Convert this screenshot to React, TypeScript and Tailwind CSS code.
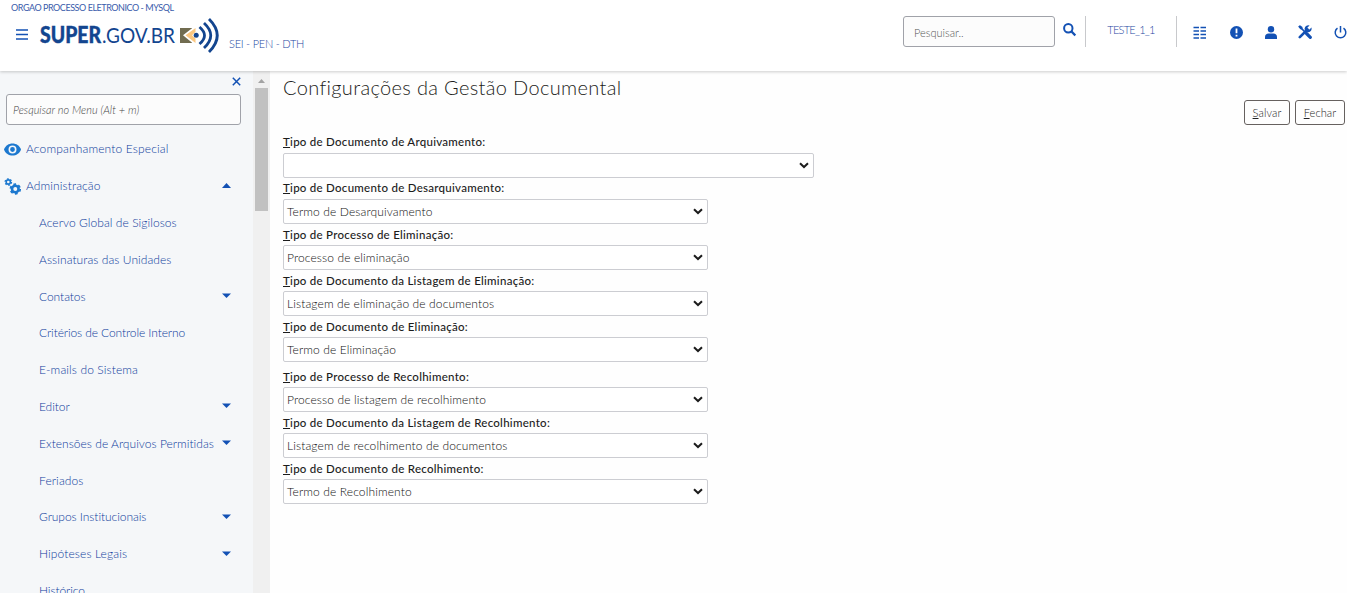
import React from "react";

const menu: { label: string; arrow?: boolean; spacing?: string }[] = [
  { label: "Acervo Global de Sigilosos", spacing: "tracking-[0.060px]" },
  { label: "Assinaturas das Unidades", spacing: "tracking-[0.060px]" },
  { label: "Contatos", arrow: true, spacing: "tracking-[-0.050px]" },
  { label: "Critérios de Controle Interno", spacing: "tracking-[-0.100px]" },
  { label: "E-mails do Sistema" },
  { label: "Editor", arrow: true, spacing: "tracking-[-0.050px]" },
  { label: "Extensões de Arquivos Permitidas", arrow: true, spacing: "tracking-[0.030px]" },
  { label: "Feriados" },
  { label: "Grupos Institucionais", arrow: true, spacing: "tracking-[-0.060px]" },
  { label: "Hipóteses Legais", arrow: true },
  { label: "Histórico", spacing: "tracking-[-0.100px]" },
];

const fields = [
  { label: "ipo de Documento de Arquivamento:", value: "", box: "w-[531px]", lead: "leading-[20px]" },
  { label: "ipo de Documento de Desarquivamento:", value: "Termo de Desarquivamento", box: "w-[425px]", lead: "leading-[20px]" },
  { label: "ipo de Processo de Eliminação:", value: "Processo de eliminação", box: "w-[425px]", lead: "leading-[22px]" },
  { label: "ipo de Documento da Listagem de Eliminação:", value: "Listagem de eliminação de documentos", box: "w-[425px]", lead: "leading-[22px]" },
  { label: "ipo de Documento de Eliminação:", value: "Termo de Eliminação", box: "w-[425px] mb-1", lead: "leading-[22px]" },
  { label: "ipo de Processo de Recolhimento:", value: "Processo de listagem de recolhimento", box: "w-[425px]", lead: "leading-[22px]" },
  { label: "ipo de Documento da Listagem de Recolhimento:", value: "Listagem de recolhimento de documentos", box: "w-[425px]", lead: "leading-[22px]" },
  { label: "ipo de Documento de Recolhimento:", value: "Termo de Recolhimento", box: "w-[425px]", lead: "leading-[22px]" },
];

function Triangle({ up = false }: { up?: boolean }) {
  return (
    <svg width="9" height="5" viewBox="0 0 9 5" className="relative -top-px ml-auto mr-[22px] shrink-0">
      <path d={up ? "M0 5L4.500 0L9 5Z" : "M0 0.500H9L4.500 5Z"} fill="#1351b4" />
    </svg>
  );
}

function Logo() {
  return (
    <svg width="181" height="36" viewBox="0 0 181 36" className="ml-[11px] mt-[3px] shrink-0">
      <g fill="#13458f" fontFamily="Lato, sans-serif" fontSize="22">
        <text x="1" y="25" fontWeight="900" textLength="61" lengthAdjust="spacingAndGlyphs" stroke="#13458f" strokeWidth="0.400">SUPER</text>
        <text x="63" y="25" fontWeight="400" textLength="73" lengthAdjust="spacingAndGlyphs">.GOV.BR</text>
      </g>
      <g transform="translate(141 0)">
        <rect x="0" y="10" width="12" height="15" fill="#716c50" />
        <path d="M13 9.500L3 17.300L13 25.500Z" fill="#fff" />
        <path d="M15.500 10L5.500 17.300L15.500 25V20.500L12 17.300L15.500 14Z" fill="#fbc780" />
        <circle cx="16.200" cy="17.300" r="2.500" fill="#13458f" />
        <g fill="none" stroke="#13458f" strokeWidth="2.800">
          <path d="M19.500 9Q29.500 17.500 19.500 26" />
          <path d="M24 5Q37.500 17.500 24 30" />
          <path d="M29 1Q45.500 17.500 29 34" />
        </g>
      </g>
    </svg>
  );
}

function Header() {
  return (
    <header className="relative z-10 flex h-[71px] shrink-0 flex-col bg-white text-[#1c469f] shadow-[0_1px_3px_rgba(0,0,0,0.2)]">
      <div className="h-[15px] whitespace-nowrap pl-[11px] text-[9px] font-normal leading-[15px] tracking-[-0.450px] text-[#3a5cab]">
        ORGAO PROCESSO ELETRONICO - MYSQL
      </div>
      <div className="flex h-[56px] items-start">
        <svg width="12" height="11" viewBox="0 0 12 11" className="ml-4 mt-[14px]">
          <path d="M0 1H12M0 5.500H12M0 10H12" stroke="#1351b4" strokeWidth="1.500" />
        </svg>
        <Logo />
        <div className="ml-[9px] mt-5 whitespace-nowrap text-[11px] leading-[18px] tracking-[-0.250px]">SEI - PEN - DTH</div>
        <div className="ml-auto mt-px flex h-[31px] w-[152px] items-center rounded-[3px] border border-[#a0a2a9] bg-[#fcfcfc] px-[10px] pt-[3px] text-[11px] text-[#555]">
          Pesquisar..
        </div>
        <svg width="13" height="14" viewBox="0 0 13 14" className="ml-[8px] mr-[-1px] mt-[8px]">
          <circle cx="5.300" cy="5.300" r="4.200" fill="none" stroke="#1351b4" strokeWidth="2" />
          <path d="M8.300 8.300L12.300 12.500" stroke="#1351b4" strokeWidth="2.300" />
        </svg>
        <div className="ml-[10px] mt-px flex h-[31px] w-[92px] justify-center border-x border-[#c8c9cc] text-[11px] leading-[28px]">
          <span className="tracking-[-0.750px]">TESTE_1_1</span>
        </div>
        <div className="-mr-px ml-[17px] mt-[10px] flex items-center text-[#1351b4]">
          <svg width="13" height="13" viewBox="0 0 13 13" className="-ml-px">
            <path d="M0.500 1.500H6M7.500 1.500H13M0.500 5H6M7.500 5H13M0.500 8.500H6M7.500 8.500H13M0.500 12H6M7.500 12H13" stroke="currentColor" strokeWidth="1.500" />
          </svg>
          <svg width="13" height="13" viewBox="0 0 13 13" className="ml-[24px]">
            <circle cx="6.500" cy="6.500" r="6.500" fill="currentColor" />
            <path d="M6.500 2.500V7.200M6.500 8.800V10.500" stroke="white" strokeWidth="1.800" />
          </svg>
          <svg width="12" height="13" viewBox="0 0 12 13" className="ml-[22px]">
            <circle cx="6" cy="3.200" r="3.200" fill="currentColor" />
            <path d="M0 13V11C0 8.900 1.500 7.600 3.500 7.600H8.500C10.500 7.600 12 8.900 12 11V13Z" fill="currentColor" />
          </svg>
          <svg width="14" height="14" viewBox="0 0 14 14" className="ml-[21px]">
            <path d="M1 1L12.500 12.500" stroke="currentColor" strokeWidth="1.700" />
            <path d="M0.300 1.800L2 0.300L4.500 2V4L4 4.500L2.300 4.300Z" fill="currentColor" />
            <path d="M8.500 8.500L12.300 12.300" stroke="currentColor" strokeWidth="3.200" strokeLinecap="round" />
            <path d="M1.800 12.200L9.500 4.500" stroke="currentColor" strokeWidth="2.600" strokeLinecap="round" />
            <path d="M11.600 0.600A3.500 3.500 0 1 0 13.400 2.600L11.500 4.400L9.700 4.200L9.500 2.500Z" fill="currentColor" />
          </svg>
          <svg width="14" height="13" viewBox="0 0 14 13" className="ml-[22px]">
            <path d="M3.500 2.200A5.300 5.300 0 1 0 9.500 2.200M6.500 0V6.500" fill="none" stroke="currentColor" strokeWidth="1.500" />
          </svg>
        </div>
      </div>
    </header>
  );
}

function Sidebar() {
  return (
    <aside className="flex w-[270px] shrink-0 overflow-hidden bg-[#f5f7f9]">
      <div className="w-[253px] text-[12px] text-[#0d3b9c]">
        <div className="flex h-[23px] justify-end pr-3 pt-[6px]">
          <svg width="9" height="9" viewBox="0 0 9 9">
            <path d="M0.800 0.800L8.200 8.200M8.200 0.800L0.800 8.200" stroke="#1351b4" strokeWidth="1.500" />
          </svg>
        </div>
        <div className="ml-[6px] flex h-[31px] w-[235px] items-center rounded-[3px] border border-[#a0a2a9] bg-[#fcfcfc] px-[6px] pt-px text-[11px] italic tracking-[0.020px] text-[#444]">
          Pesquisar no Menu (Alt + m)
        </div>
        <div className="mt-[6px] flex h-[36.800px] items-center">
          <svg width="17" height="13" viewBox="0 0 17 13" className="ml-1 mr-[5px]">
            <path d="M0 6.500C1.500 2.500 4.800 0.500 8.500 0.500S15.500 2.500 17 6.500C15.500 10.500 12.200 12.500 8.500 12.500S1.500 10.500 0 6.500Z" fill="#1c78cf" />
            <circle cx="8.500" cy="6.500" r="3.200" fill="none" stroke="#f5f7f9" strokeWidth="1.600" />
          </svg>
          <span className="tracking-[0.150px]">Acompanhamento Especial</span>
        </div>
        <div className="flex h-[36.800px] items-center">
          <svg width="17" height="17" viewBox="0 0 17 17" className="ml-1 mr-[5px]">
            <g fill="none" stroke="#1c78cf">
              <circle cx="4.300" cy="4" r="2.100" strokeWidth="1.600" />
              <circle cx="4.300" cy="4" r="3.200" strokeWidth="1.300" strokeDasharray="1.700 1.651" />
              <circle cx="11.300" cy="11" r="3.300" strokeWidth="2.600" />
              <circle cx="11.300" cy="11" r="4.900" strokeWidth="1.700" strokeDasharray="2.700 2.431" />
            </g>
          </svg>
          <span className="tracking-[0.100px]">Administração</span>
          <Triangle up />
        </div>
        {menu.map((m) => (
          <div key={m.label} className="flex h-[36.800px] items-center whitespace-nowrap pl-[39px]">
            <span className={m.spacing ?? "tracking-[0.110px]"}>{m.label}</span>
            {m.arrow && <Triangle />}
          </div>
        ))}
      </div>
      <div className="flex w-[17px] flex-col items-center bg-[#f0f0f0]">
        <svg width="7" height="4" viewBox="0 0 7 4" className="mt-2">
          <path d="M0 4L3.500 0L7 4Z" fill="#a3a3a3" />
        </svg>
        <div className="mt-[5px] h-[123px] w-[13px] bg-[#c1c1c1]" />
      </div>
    </aside>
  );
}

export default function App() {
  return (
    <div className="flex h-[593px] w-[1347px] flex-col overflow-hidden bg-[#fefefe] font-['Lato',sans-serif] font-light">
      <Header />
      <div className="flex min-h-0 flex-1">
        <Sidebar />
        <main className="flex-1 pl-[13px]">
          <h1 className="h-[29px] text-[20px] leading-[32px] tracking-[0.340px] text-[#1c1c20]">Configurações da Gestão Documental</h1>
          <div className="flex h-[25px] justify-end gap-[5px] pr-[2px] text-[11px] text-[#222]">
            <button className="w-[46px] rounded-[3px] border border-[#66615f] pt-px tracking-[0.100px]"><u>S</u>alvar</button>
            <button className="w-[50px] rounded-[3px] border border-[#66615f] pt-px tracking-[0.100px]"><u>F</u>echar</button>
          </div>
          <div className="mt-[7px]">
            {fields.map((f) => (
              <div key={f.label}>
                <div className={`h-[21px] text-[11.500px] font-medium tracking-[0.270px] text-[#1c1c1c] ${f.lead}`}><u>T</u>{f.label}</div>
                <div className={`flex h-[25px] items-center rounded-[2px] border border-[#cccdd2] bg-white pl-[3px] pr-1 text-[12px] tracking-[0.120px] text-[#111] ${f.box}`}>
                  {f.value}
                  <svg width="10" height="7" viewBox="0 0 10 7" className="ml-auto">
                    <path d="M1 1.200L5 5L9 1.200" fill="none" stroke="#1c1c1c" strokeWidth="2" />
                  </svg>
                </div>
              </div>
            ))}
          </div>
        </main>
      </div>
    </div>
  );
}
